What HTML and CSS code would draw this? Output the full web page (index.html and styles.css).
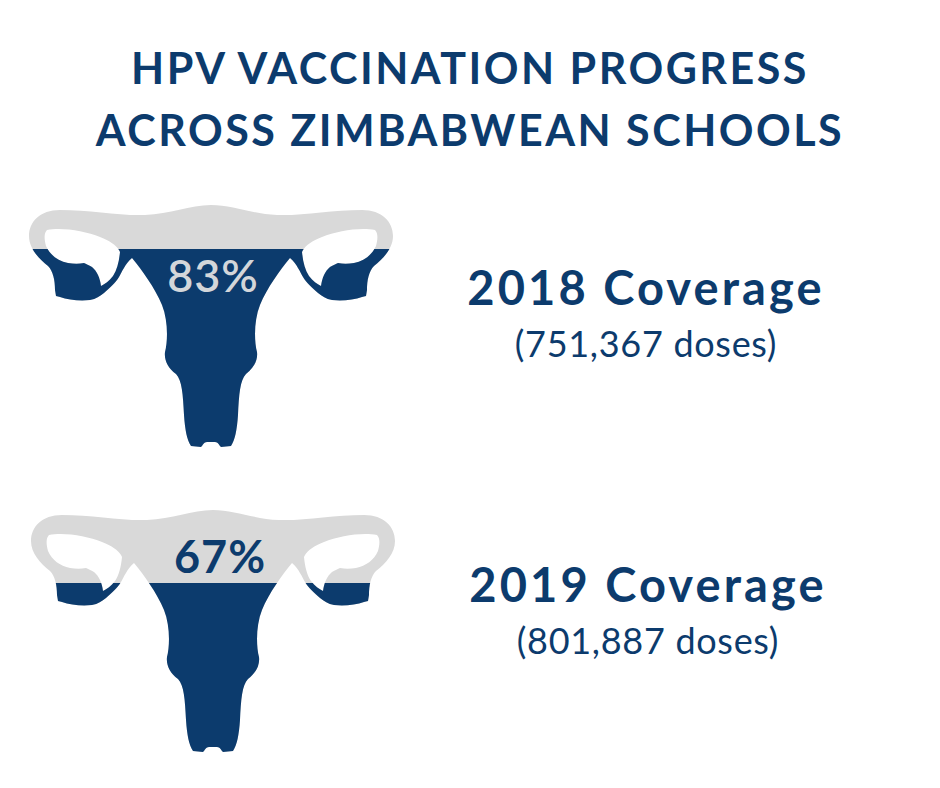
FILE: index.html
```html
<!DOCTYPE html>
<html lang="en">
<head>
<meta charset="utf-8">
<title>HPV Vaccination Progress</title>
<link rel="stylesheet" href="styles.css">
</head>
<body>
<h1 class="title">HPV VACCINATION PROGRESS<br>ACROSS ZIMBABWEAN SCHOOLS</h1>

<section class="row row-1">
  <svg class="figure" viewBox="26 203 370 248" width="370" height="248" aria-hidden="true">
    <defs>
      <clipPath id="uterus-1">
        <path clip-rule="evenodd" d="M211 205 C190 205 170 214 145 215 C120 216 90 210 60 210 C40 210 29 222 29 236 C29 248 38 258 48 266 C53 271 55 280 55 290 L56 296 L60 297 C68 300 80 301 90 300 C96 299 100 296 104 293 C110 288 116 282 119 277 C122 272 125 264 132 258 C142 270 155 288 162 305 C168 320 168 340 165 352 C164 360 168 368 176 374 C182 380 183 395 184 415 C185 430 187 440 191 446 L201 447 C203 445 204 442 207 442 L215 442 C218 442 219 445 221 447 L231 446 C235 440 237 430 238 415 C239 395 240 380 246 374 C254 368 258 360 257 352 C254 340 254 320 260 305 C267 288 280 270 290 258 C297 264 300 272 303 277 C306 282 312 288 318 293 C322 296 326 299 332 300 C342 301 354 300 362 297 L366 296 L367 290 C367 280 369 271 374 266 C384 258 393 248 393 236 C393 222 382 210 362 210 C332 210 302 216 277 215 C252 214 232 205 211 205 Z M47 230 C62 227 85 231 100 237 C110 241 116 245 119 250 L120 252 C119 262 117 270 113 276 C109 281 105 284 101 286 C100 278 97 271 92 267 C89 265 86 264 84 263 C79 264 74 264 68 263 C58 261 50 255 46 246 C44 239 44 233 47 230 Z M375 230 C360 227 337 231 322 237 C312 241 306 245 303 250 L302 252 C303 262 305 270 309 276 C313 281 317 284 321 286 C322 278 325 271 330 267 C333 265 336 264 338 263 C343 264 348 264 354 263 C364 261 372 255 376 246 C378 239 378 233 375 230 Z"/>
      </clipPath>
    </defs>
    <g clip-path="url(#uterus-1)">
      <rect class="empty" x="20" y="200" width="380" height="260"/>
      <rect class="filled" x="20" y="249" width="380" height="211"/>
    </g>
    <text class="pct pct-light" x="213" y="292">83%</text>
  </svg>
  <div class="info">
    <h2 class="heading">2018 Coverage</h2>
    <p class="doses">(751,367 doses)</p>
  </div>
</section>

<section class="row row-2">
  <svg class="figure" viewBox="26 203 370 248" width="370" height="248" aria-hidden="true">
    <defs>
      <clipPath id="uterus-2">
        <path clip-rule="evenodd" d="M211 205 C190 205 170 214 145 215 C120 216 90 210 60 210 C40 210 29 222 29 236 C29 248 38 258 48 266 C53 271 55 280 55 290 L56 296 L60 297 C68 300 80 301 90 300 C96 299 100 296 104 293 C110 288 116 282 119 277 C122 272 125 264 132 258 C142 270 155 288 162 305 C168 320 168 340 165 352 C164 360 168 368 176 374 C182 380 183 395 184 415 C185 430 187 440 191 446 L201 447 C203 445 204 442 207 442 L215 442 C218 442 219 445 221 447 L231 446 C235 440 237 430 238 415 C239 395 240 380 246 374 C254 368 258 360 257 352 C254 340 254 320 260 305 C267 288 280 270 290 258 C297 264 300 272 303 277 C306 282 312 288 318 293 C322 296 326 299 332 300 C342 301 354 300 362 297 L366 296 L367 290 C367 280 369 271 374 266 C384 258 393 248 393 236 C393 222 382 210 362 210 C332 210 302 216 277 215 C252 214 232 205 211 205 Z M47 230 C62 227 85 231 100 237 C110 241 116 245 119 250 L120 252 C119 262 117 270 113 276 C109 281 105 284 101 286 C100 278 97 271 92 267 C89 265 86 264 84 263 C79 264 74 264 68 263 C58 261 50 255 46 246 C44 239 44 233 47 230 Z M375 230 C360 227 337 231 322 237 C312 241 306 245 303 250 L302 252 C303 262 305 270 309 276 C313 281 317 284 321 286 C322 278 325 271 330 267 C333 265 336 264 338 263 C343 264 348 264 354 263 C364 261 372 255 376 246 C378 239 378 233 375 230 Z"/>
      </clipPath>
    </defs>
    <g clip-path="url(#uterus-2)">
      <rect class="empty" x="20" y="200" width="380" height="260"/>
      <rect class="filled" x="20" y="278" width="380" height="182"/>
    </g>
    <text class="pct pct-dark" x="218" y="268">67%</text>
  </svg>
  <div class="info">
    <h2 class="heading">2019 Coverage</h2>
    <p class="doses">(801,887 doses)</p>
  </div>
</section>
</body>
</html>
```

FILE: styles.css
```css
html, body {
  margin: 0;
  padding: 0;
  background: #ffffff;
}

body {
  width: 940px;
  font-family: Lato, "Open Sans", "Liberation Sans", sans-serif;
  color: #0c3b6d;
}

.title {
  box-sizing: border-box;
  height: 203px;
  margin: 0;
  padding-top: 37px;
  text-align: center;
  font-size: 43px;
  line-height: 62px;
  font-weight: 700;
  letter-spacing: 2.5px;
}

.row {
  display: flex;
  align-items: flex-start;
  height: 305px;
  padding-left: 26px;
}

.row-2 {
  padding-left: 28px;
}

.figure {
  display: block;
  flex: none;
  width: 370px;
  height: 248px;
}

.empty {
  fill: #d9d9d9;
}

.filled {
  fill: #0c3b6d;
}

.pct {
  font-family: Lato, "Open Sans", sans-serif;
  font-size: 45px;
  font-weight: 700;
  text-anchor: middle;
  letter-spacing: 1px;
}

.pct-light {
  fill: #d3d6da;
  font-weight: 600;
}

.pct-dark {
  fill: #0c3b6d;
}

.info {
  width: 500px;
  text-align: center;
  padding-top: 58px;
}

.row-2 .info {
  padding-top: 50px;
}

.heading {
  margin: 0;
  font-size: 47px;
  line-height: 53px;
  font-weight: 700;
  letter-spacing: 3.1px;
}

.doses {
  margin: 0;
  font-size: 36px;
  line-height: 58px;
  font-weight: 400;
  letter-spacing: 0.7px;
}
```
